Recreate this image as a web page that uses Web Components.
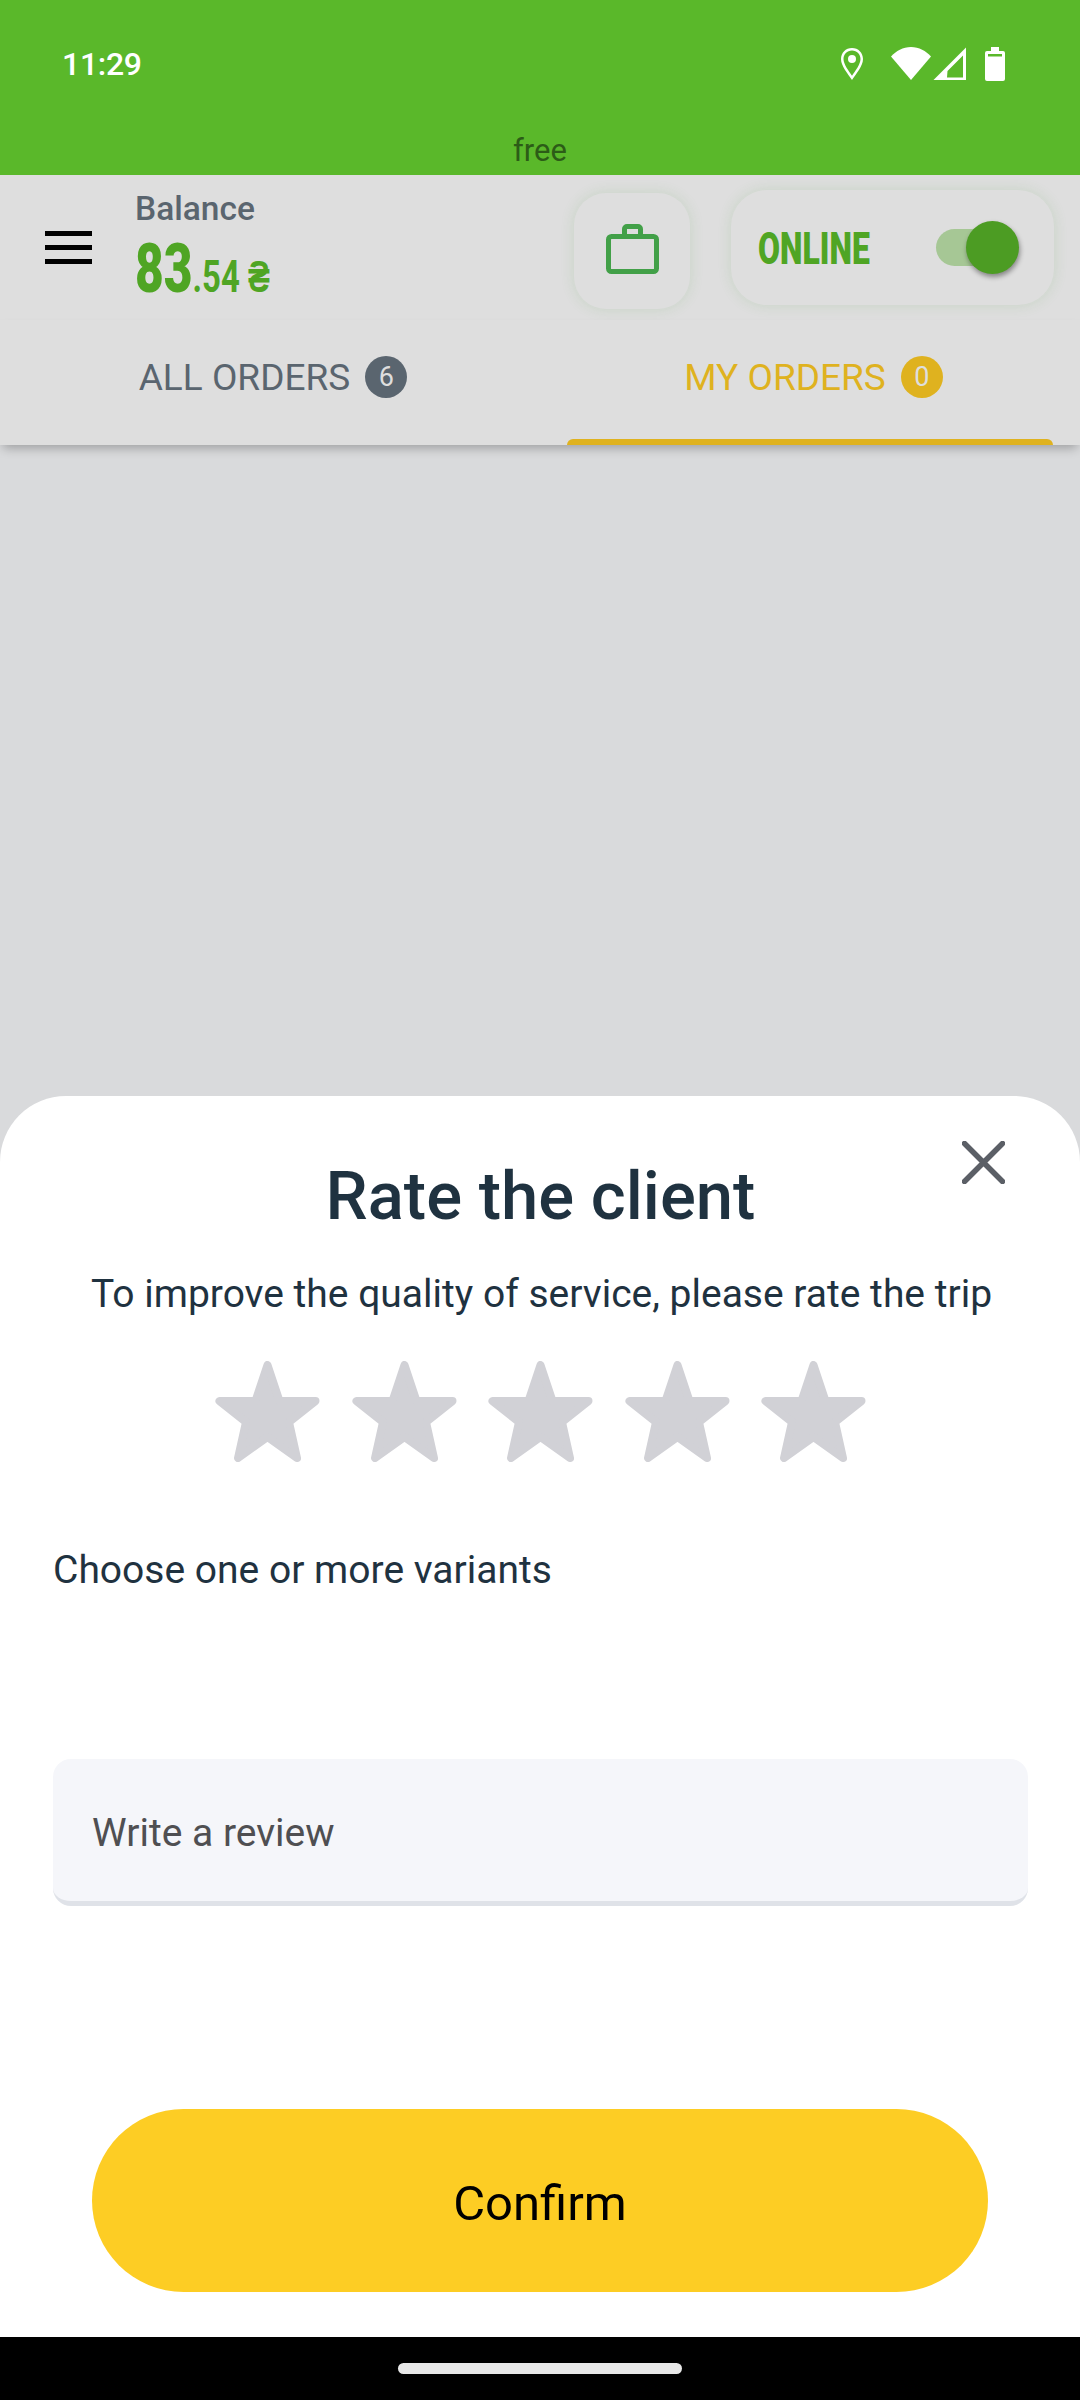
<!DOCTYPE html>
<html lang="en">
<head>
<meta charset="utf-8">
<title>Rate the client</title>
<style>
    html, body { margin: 0; padding: 0; background: #000; }
    body { font-family: Roboto, "Liberation Sans", sans-serif; }
</style>
</head>
<body>
<app-shell>
    <status-bar time="11:29" plan="free"></status-bar>
    <top-header></top-header>
    <order-tabs>
        <order-tab count="6">ALL ORDERS</order-tab>
        <order-tab count="0" active>MY ORDERS</order-tab>
    </order-tabs>
    <rate-sheet>
        <star-rating></star-rating>
    </rate-sheet>
    <nav-bar></nav-bar>
</app-shell>

<script>
class AppShell extends HTMLElement {
    constructor() {
        super();
        this.attachShadow({ mode: 'open' }).innerHTML = `
        <style>
            :host { display: flex; flex-direction: column; width: 1080px; height: 2400px; background: #d9dadc; overflow: hidden; }
        </style>
        <slot></slot>`;
    }
}

class StatusBar extends HTMLElement {
    constructor() {
        super();
        this.attachShadow({ mode: 'open' }).innerHTML = `
        <style>
            :host { display: flex; flex-direction: column; height: 175px; background: #5ab82a; box-sizing: border-box; padding: 44px 75px 0 62px; }
            .row { display: flex; justify-content: space-between; align-items: flex-start; height: 88px; }
            .time { color: #fff; font-size: 32px; font-weight: 500; line-height: 40px; letter-spacing: -.3px; }
            .icons { display: flex; align-items: flex-start; margin-top: 3px; }
            .plan { text-align: center; margin-left: -62px; margin-right: -75px; color: #2c5c17; font-size: 31px; line-height: 36px; margin-top: 1px; }
            svg { display: block; fill: #fff; }
        </style>
        <div class="row">
            <div class="time">${this.getAttribute('time')}</div>
            <div class="icons">
                <svg width="24" height="34" viewBox="0 0 24 34" style="margin-right:27px"><path fill-rule="evenodd" d="M12 1C5.6 1 1 5.8 1 12c0 7 6.700 14.500 11 21 4.300-6.500 11-14 11-21C23 5.800 18.400 1 12 1zm0 2.500c5 0 8.500 3.800 8.500 8.500 0 5.300-5 11.500-8.500 16.700C8.500 23.500 3.500 17.300 3.500 12 3.500 7.300 7 3.500 12 3.500z"/><circle cx="12" cy="12" r="4"/></svg>
                <svg width="40" height="33" viewBox="0 0 40 33" style="margin-right:2px"><path d="M20 33 0 9.500C5 4 12 0 20 0s15 4 20 9.500z"/></svg>
                <svg width="34" height="34" viewBox="0 0 34 34" style="margin-right:18px"><path fill-rule="evenodd" d="M33 .5V33H.5zM30 8.500 14.500 24 14 30.500h16z"/></svg>
                <svg width="20" height="34" viewBox="0 0 20 34"><path fill-rule="evenodd" d="M6 0h8v4h4a2 2 0 0 1 2 2v26a2 2 0 0 1-2 2H2a2 2 0 0 1-2-2V6a2 2 0 0 1 2-2h4zM3 7v2.500h14V7z"/></svg>
            </div>
        </div>
        <div class="plan">${this.getAttribute('plan')}</div>`;
    }
}

class TopHeader extends HTMLElement {
    constructor() {
        super();
        this.attachShadow({ mode: 'open' }).innerHTML = `
        <style>
            :host { display: flex; align-items: flex-start; height: 145px; background: #dedede; box-sizing: border-box; padding: 15px 26px 0 45px; color: #4fa524; }
            .menu { display: flex; flex-direction: column; gap: 9px; width: 47px; margin-top: 41px; flex: none; }
            .menu i { display: block; height: 5px; background: #000; }
            .balance { width: 439px; margin-left: 43px; flex: none; box-sizing: border-box; }
            .label { font-size: 33.500px; font-weight: 500; line-height: 38px; color: #5a656f; }
            .amount { display: block; white-space: nowrap; font-weight: 700; font-size: 45px; line-height: 70px; margin-top: 6px; transform: scaleX(.73); transform-origin: left center; }
            .amount b { font-size: 68px; font-weight: 900; }
            .brief, .online { background: #dedede; box-shadow: 0 0 14px rgba(80, 160, 70, .16); }
            .brief { display: flex; align-items: center; justify-content: center; width: 116px; height: 116px; border-radius: 32px; margin-top: 3px; box-sizing: border-box; flex: none; padding-bottom: 4px; }
            .online { position: relative; display: flex; align-items: center; width: 323px; height: 115px; border-radius: 36px; margin-left: 41px; box-sizing: border-box; padding-left: 27px; flex: none; }
            .online span { font-size: 45px; font-weight: 900; display: block; transform: scaleX(.71); transform-origin: left center; margin-top: 2px; }
            .track { position: absolute; left: 205px; top: 39px; width: 74px; height: 37px; border-radius: 19px; background: #a6c795; }
            .thumb { position: absolute; left: 235px; top: 31px; width: 53px; height: 53px; border-radius: 50%; background: #4c9c23; box-shadow: 1px 3px 5px rgba(0, 0, 0, .4); }
        </style>
        <div class="menu"><i></i><i></i><i></i></div>
        <div class="balance">
            <div class="label">Balance</div>
            <div class="amount"><b>83</b>.54&nbsp;₴</div>
        </div>
        <div class="brief">
            <svg width="53" height="50" viewBox="0 0 53 50" fill="none" stroke="#42a048" stroke-width="5" stroke-linejoin="round"><rect x="2.500" y="12.500" width="48" height="35" rx="3"/><path d="M18.500 12V5a2.500 2.500 0 0 1 2.500-2.500h11A2.500 2.500 0 0 1 34.500 5v7"/></svg>
        </div>
        <div class="online">
            <span>ONLINE</span>
            <div class="track"></div>
            <div class="thumb"></div>
        </div>`;
    }
}

class OrderTabs extends HTMLElement {
    constructor() {
        super();
        this.attachShadow({ mode: 'open' }).innerHTML = `
        <style>
            :host { display: grid; grid-template-columns: 1fr 1fr; height: 125px; background: #dedede; padding: 0 27px; column-gap: 48px; box-shadow: 0 6px 10px -3px rgba(0, 0, 0, .28); position: relative; z-index: 1; }
        </style>
        <slot></slot>`;
    }
}

class OrderTab extends HTMLElement {
    constructor() {
        super();
        const color = this.hasAttribute('active') ? '#dfb21f' : '#5a656f';
        this.attachShadow({ mode: 'open' }).innerHTML = `
        <style>
            :host { position: relative; display: flex; align-items: center; justify-content: center; gap: 15px; box-sizing: border-box; height: 125px; padding: 0 0 10px 3px; color: ${color}; font-size: 37px; white-space: nowrap; }
            :host([active]) { padding-left: 10px; }
            :host([active])::after { content: ""; position: absolute; left: 3px; right: 0; bottom: 0; height: 6px; border-radius: 6px 6px 0 0; background: #dfb21f; }
            .badge { display: flex; align-items: center; justify-content: center; width: 42px; height: 42px; border-radius: 50%; background: ${color}; color: #dedede; font-size: 27px; margin-top: -2px; }
        </style>
        <span><slot></slot></span>
        <span class="badge">${this.getAttribute('count')}</span>`;
    }
}

class StarRating extends HTMLElement {
    constructor() {
        super();
        const star = `<svg width="105" height="101" viewBox="0 0 105 101"><path fill="#d1d1d6" stroke="#d1d1d6" stroke-width="8" stroke-linejoin="round" d="M52.500 4 64.500 40 100.500 40 74 61 82 97 52.500 76 23 97 31 61 4.500 40 40.500 40z"/></svg>`;
        this.attachShadow({ mode: 'open' }).innerHTML = `
        <style>
            :host { display: flex; justify-content: center; gap: 31.500px; }
            svg { display: block; }
        </style>
        ${star.repeat(5)}`;
    }
}

class RateSheet extends HTMLElement {
    constructor() {
        super();
        this.attachShadow({ mode: 'open' }).innerHTML = `
        <style>
            :host { position: relative; display: flex; flex-direction: column; box-sizing: border-box; height: 1241px; margin-top: auto; background: #fff; border-radius: 66px 66px 0 0; padding: 0 52px 0 53px; color: #1f3240; }
            h1 { margin: 61px 0 0; font-size: 67px; line-height: 78px; font-weight: 500; text-align: center; color: #1f3240; }
            .sub { margin-top: 36px; padding-left: 2px; font-size: 39px; line-height: 46px; text-align: center; white-space: nowrap; }
            .stars { margin-top: 44px; }
            .hint { margin-top: 86px; font-size: 39px; line-height: 44px; }
            .review { display: flex; align-items: center; box-sizing: border-box; height: 147px; margin-top: 167px; padding: 6px 39px 0; background: #f5f6fa; border-bottom: 5px solid #dfe2e8; border-radius: 18px; color: #4f4f52; font-size: 39px; }
            .confirm { display: flex; align-items: center; justify-content: center; box-sizing: border-box; height: 183px; margin: 203px 40px 0 39px; padding-top: 5px; border-radius: 92px; background: #fdcd24; color: #000; font-size: 49px; }
            .close { position: absolute; top: 45px; right: 75px; display: block; }
        </style>
        <svg class="close" width="43" height="43" viewBox="0 0 43 43" fill="none" stroke="#5b5f66" stroke-width="5.500" stroke-linecap="round"><path d="M2.500 2.500 40.500 40.500M40.500 2.500 2.500 40.500"/></svg>
        <h1>Rate the client</h1>
        <div class="sub">To improve the quality of service, please rate the trip</div>
        <div class="stars"><slot></slot></div>
        <div class="hint">Choose one or more variants</div>
        <div class="review">Write a review</div>
        <div class="confirm">Confirm</div>`;
    }
}

class NavBar extends HTMLElement {
    constructor() {
        super();
        this.attachShadow({ mode: 'open' }).innerHTML = `
        <style>
            :host { display: flex; justify-content: center; height: 63px; background: #000; padding-top: 26px; box-sizing: border-box; }
            i { display: block; width: 284px; height: 11px; border-radius: 6px; background: #e8e8e8; }
        </style>
        <i></i>`;
    }
}

customElements.define('app-shell', AppShell);
customElements.define('status-bar', StatusBar);
customElements.define('top-header', TopHeader);
customElements.define('order-tabs', OrderTabs);
customElements.define('order-tab', OrderTab);
customElements.define('star-rating', StarRating);
customElements.define('rate-sheet', RateSheet);
customElements.define('nav-bar', NavBar);
</script>
</body>
</html>
